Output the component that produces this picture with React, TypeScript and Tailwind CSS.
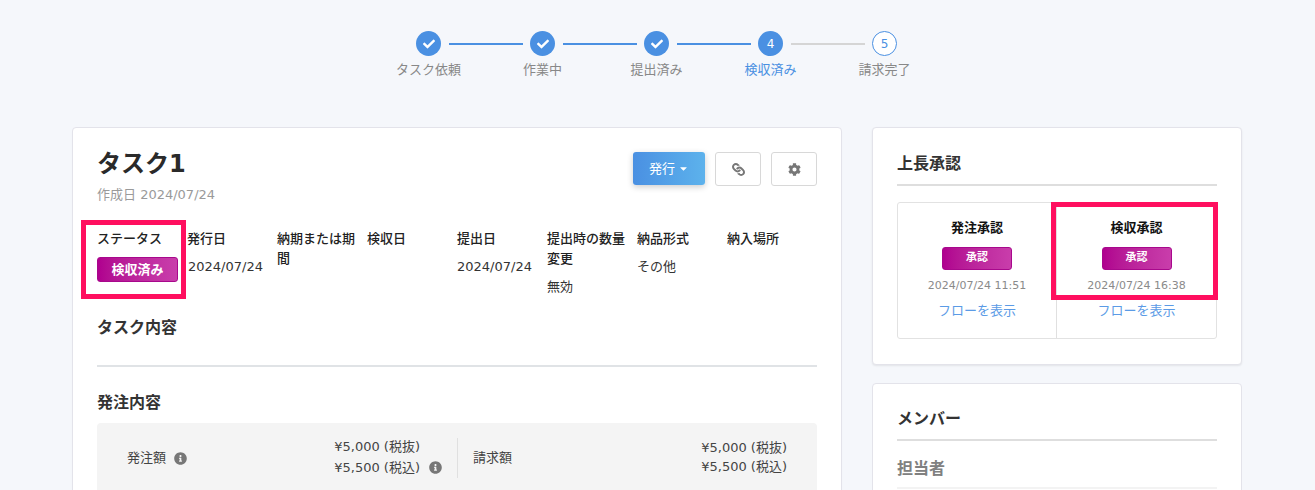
import { FaCheck, FaLink, FaCog, FaInfoCircle, FaCaretDown } from "react-icons/fa";

const font = { fontFamily: '"DejaVu Sans","Noto Sans CJK JP",sans-serif' };

function Step({ label, state, n, last }: { label: string; state: "done" | "current" | "todo"; n?: number; last?: boolean }) {
  const line = state === "current" ? "bg-[#d5d5d5]" : "bg-[#4a90e2]";
  return (
    <div className="relative flex w-[114px] flex-col items-center">
      <div
        className={
          state === "todo"
            ? "flex h-[25px] w-[25px] items-center justify-center rounded-full border border-[#4a90e2] bg-white text-[12px] text-[#4a90e2]"
            : "flex h-[25px] w-[25px] items-center justify-center rounded-full bg-[#4a90e2] text-[12px] text-white"
        }
      >
        {n ?? <FaCheck className="text-[12px]" />}
      </div>
      {!last && <div className={`absolute left-[77px] top-[12px] h-[2px] w-[74px] ${line}`} />}
      <div className={`mt-[3px] text-[13px] leading-[22px] ${state === "current" ? "text-[#4a90e2]" : "text-[#888]"}`}>{label}</div>
    </div>
  );
}

function Col({ title, children }: { title: string; children?: React.ReactNode }) {
  return (
    <div className="w-[90px] pr-[2px]">
      <div className="text-[13px] font-medium leading-[20px] text-[#222]">{title}</div>
      <div className="mt-[8px] text-[13px] leading-[20px] text-[#333]">{children}</div>
    </div>
  );
}

function Badge({ text, wide }: { text: string; wide?: boolean }) {
  return (
    <div
      className={`flex items-center justify-center rounded-[3px] border border-[#a8088c] bg-gradient-to-r from-[#b0008f] to-[#c93dab] font-bold text-white ${
        wide ? "mt-[4px] h-[25px] w-[81px] text-[13px]" : "h-[23px] w-[70px] text-[11px]"
      }`}
    >
      {text}
    </div>
  );
}

function Approval({ title, time, className }: { title: string; time: string; className: string }) {
  return (
    <div className={`flex flex-col items-center pt-[15px] ${className}`}>
      <div className="text-[13px] font-bold leading-[20px] text-[#111]">{title}</div>
      <div className="mt-[9px]">
        <Badge text="承認" />
      </div>
      <div className="mt-[7px] text-[11px] leading-[18px] text-[#8a8a8a]">{time}</div>
      <div className="mt-[6px] text-[13px] leading-[20px] text-[#5b9be6]">フローを表示</div>
    </div>
  );
}

export default function App() {
  return (
    <div className="h-[490px] overflow-hidden bg-[#f5f7fb] text-[#333]" style={font}>
      <div className="flex justify-center pt-[31px]">
        <div className="flex translate-x-[-1px]">
          <Step label="タスク依頼" state="done" />
          <Step label="作業中" state="done" />
          <Step label="提出済み" state="done" />
          <Step label="検収済み" state="current" n={4} />
          <Step label="請求完了" state="todo" n={5} last />
        </div>
      </div>

      <div className="mt-[46px] flex items-start gap-[30px] px-[72px]">
        <div className="relative w-[770px] shrink-0 rounded-[4px] border border-[#e3e3ea] bg-white px-[24px] pt-[20px] shadow-[0_1px_1px_rgba(0,0,0,0.04)]">
          <div className="flex items-start justify-between">
            <div>
              <div className="text-[24px] font-bold leading-[32px] text-[#2a2a2a]">タスク1</div>
              <div className="mt-[5px] text-[13px] leading-[20px] text-[#9a9a9a]">作成日 2024/07/24</div>
            </div>
            <div className="mt-[4px] flex gap-[10px]">
              <div className="flex h-[33px] w-[72px] items-center justify-center gap-[3px] rounded-[3px] bg-gradient-to-r from-[#4a90e2] to-[#5db2ec] text-[13px] text-white shadow-[0_2px_6px_rgba(0,0,0,0.2)]">
                発行 <FaCaretDown className="text-[11px]" />
              </div>
              <div className="flex h-[34px] w-[46px] items-center justify-center rounded-[3px] border border-[#d8d8d8] bg-white text-[13px] text-[#777]">
                <FaLink className="rotate-90" />
              </div>
              <div className="flex h-[34px] w-[46px] items-center justify-center rounded-[3px] border border-[#d8d8d8] bg-white text-[13px] text-[#777]">
                <FaCog />
              </div>
            </div>
          </div>

          <div className="mt-[24px] flex">
            <Col title="ステータス">
              <Badge text="検収済み" wide />
            </Col>
            <Col title="発行日">
              <span className="pl-[1px]">2024/07/24</span>
            </Col>
            <Col title="納期または期間" />
            <Col title="検収日" />
            <Col title="提出日">2024/07/24</Col>
            <Col title="提出時の数量変更">無効</Col>
            <Col title="納品形式">その他</Col>
            <Col title="納入場所" />
          </div>

          <div className="mt-[19px] text-[16px] font-bold leading-[24px] text-[#333]">タスク内容</div>
          <div className="mt-[25px] h-[2px] bg-[#e0e3e6]" />
          <div className="mt-[24px] text-[16px] font-bold leading-[24px] text-[#333]">発注内容</div>
          <div className="mt-[8px] flex h-[120px] rounded-[4px] bg-[#f4f4f4] pt-[15px]">
            <div className="flex h-[40px] w-[361px] items-center border-r border-[#e0e0e0] pb-[2px] pl-[30px] pr-[15px]">
              <div className="mt-[2px] flex items-center gap-[8px] text-[13px] text-[#444]">
                発注額 <FaInfoCircle className="text-[13px] text-[#777]" />
              </div>
              <div className="ml-auto flex items-end gap-[9px]">
                <div className="text-[13px] leading-[21px] text-[#444]">
                  <div>¥5,000 (税抜)</div>
                  <div>¥5,500 (税込)</div>
                </div>
                <FaInfoCircle className="mb-[4px] text-[13px] text-[#777]" />
              </div>
            </div>
            <div className="flex h-[40px] flex-1 items-center pb-[2px] pl-[15px] pr-[30px]">
              <div className="mt-[2px] text-[13px] text-[#444]">請求額</div>
              <div className="ml-auto text-[13px] leading-[19px] text-[#444]">
                <div>¥5,000 (税抜)</div>
                <div>¥5,500 (税込)</div>
              </div>
            </div>
          </div>
          <div className="pointer-events-none absolute left-[8px] top-[92px] h-[79px] w-[105px] border-[5px] border-[#ff0f5f]" />
        </div>

        <div className="flex w-[370px] shrink-0 flex-col gap-[18px]">
          <div className="relative h-[238px] rounded-[4px] border border-[#e3e3ea] bg-white px-[24px] pt-[24px] shadow-[0_1px_2px_rgba(0,0,0,0.08)]">
            <div className="text-[16px] font-bold leading-[24px] text-[#333]">上長承認</div>
            <div className="mt-[8px] h-[2px] bg-[#dedede]" />
            <div className="mt-[16px] flex h-[137px] rounded-[3px] border border-[#e2e2e2]">
              <Approval title="発注承認" time="2024/07/24 11:51" className="w-[159px] border-r border-[#e0e0e0]" />
              <Approval title="検収承認" time="2024/07/24 16:38" className="flex-1" />
            </div>
            <div className="pointer-events-none absolute left-[178px] top-[74px] h-[98px] w-[167px] border-[5px] border-[#ff0f5f]" />
          </div>
          <div className="h-[200px] rounded-[4px] border border-[#e3e3ea] bg-white px-[24px] pt-[23px]">
            <div className="text-[16px] font-bold leading-[24px] text-[#333]">メンバー</div>
            <div className="mt-[8px] h-[2px] bg-[#dedede]" />
            <div className="mt-[16px] text-[16px] font-bold leading-[24px] text-[#808080]">担当者</div>
            <div className="mt-[6px] h-[2px] bg-[#f3f3f3]" />
          </div>
        </div>
      </div>
    </div>
  );
}
